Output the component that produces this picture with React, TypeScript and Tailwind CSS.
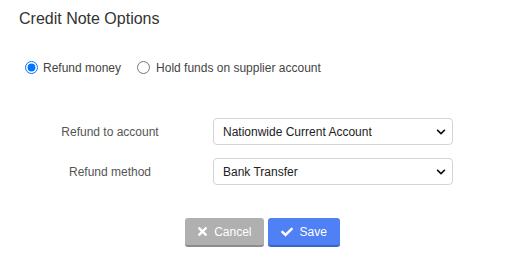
import { useState } from 'react'
import { FaTimes, FaCheck, FaChevronDown } from 'react-icons/fa'

const font = { fontFamily: '"Liberation Sans", Arial, sans-serif' }

function SelectField({ value, options }: { value: string; options: string[] }) {
  return (
    <div className="relative h-[27px] w-[240px]">
      <select
        defaultValue={value}
        className="h-full w-full appearance-none rounded-[4px] border border-[#d4d4d4] bg-white pl-[9px] pr-6 text-[12px] text-[#222] outline-none"
      >
        {options.map((o) => (
          <option key={o}>{o}</option>
        ))}
      </select>
      <FaChevronDown size={10} className="pointer-events-none absolute right-[7px] top-1/2 -translate-y-1/2 text-[#111]" />
    </div>
  )
}

export default function App() {
  const [mode, setMode] = useState<'refund' | 'hold'>('refund')

  return (
    <div className="h-[277px] w-[525px] bg-white" style={font}>
      <div className="pl-[19px] pt-[11px]">
        <h2 className="text-[16px] leading-[16px] font-normal text-[#333]">Credit Note Options</h2>

        {/* Mode */}
        <div className="mt-[34px] flex h-[13px] items-center pl-[6px] text-[12px] text-[#444]">
          <label className="flex items-center gap-[5px]">
            <input
              type="radio"
              name="mode"
              checked={mode === 'refund'}
              onChange={() => setMode('refund')}
              className="m-0 h-[13px] w-[13px]"
            />
            Refund money
          </label>
          <label className="ml-[16px] flex items-center gap-[6px]">
            <input
              type="radio"
              name="mode"
              checked={mode === 'hold'}
              onChange={() => setMode('hold')}
              className="m-0 h-[13px] w-[13px]"
            />
            Hold funds on supplier account
          </label>
        </div>

        {/* Refund details */}
        <div className="mt-[44px] flex flex-col gap-[13px]">
          <div className="flex items-center gap-[12px]">
            <span className="w-[182px] text-center text-[12px] text-[#555]">Refund to account</span>
            <SelectField
              value="Nationwide Current Account"
              options={['Nationwide Current Account', 'Barclays Business Account', 'Petty Cash']}
            />
          </div>
          <div className="flex items-center gap-[12px]">
            <span className="w-[182px] text-center text-[12px] text-[#555]">Refund method</span>
            <SelectField value="Bank Transfer" options={['Bank Transfer', 'Cheque', 'Cash']} />
          </div>
        </div>
      </div>

      <div className="mt-[33px] flex justify-center gap-[4px]">
        <button className="flex h-[29px] items-center gap-[7px] rounded-[3px] border-b-2 border-[#8d8d8d] bg-[#b0b0b0] pl-[13px] pr-[12px] text-[12px] text-white">
          <FaTimes className="h-[13px] w-[9px]" />
          Cancel
        </button>
        <button className="flex h-[29px] items-center gap-[7px] rounded-[3px] border-b-2 border-[#3c63cc] bg-[#4f80f6] px-[13px] text-[12px] text-white">
          <FaCheck className="h-[12px] w-[12px]" />
          Save
        </button>
      </div>
    </div>
  )
}
